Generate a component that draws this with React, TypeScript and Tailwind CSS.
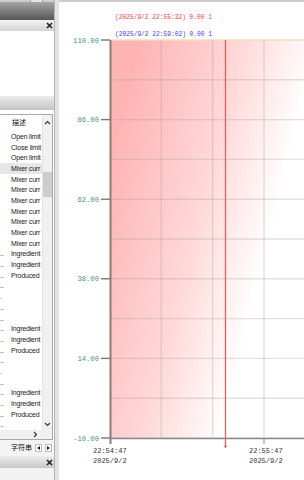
import React from 'react';

type Row = { a: string; b: string; blue?: boolean };

const rows: Row[] = [
  { a: '', b: 'Open limit' },
  { a: '', b: 'Close limit' },
  { a: '', b: 'Open limit' },
  { a: '', b: 'Mixer curr' },
  { a: '', b: 'Mixer curr' },
  { a: '', b: 'Mixer curr' },
  { a: '', b: 'Mixer curr' },
  { a: '', b: 'Mixer curr' },
  { a: '', b: 'Mixer curr' },
  { a: '', b: 'Mixer curr' },
  { a: '', b: 'Mixer curr' },
  { a: '..', b: 'Ingredient' },
  { a: '..', b: 'Ingredient' },
  { a: '..', b: 'Produced' },
  { a: '..', b: '' },
  { a: '.', b: '', blue: true },
  { a: '..', b: '' },
  { a: '..', b: '' },
  { a: '..', b: 'Ingredient' },
  { a: '..', b: 'Ingredient' },
  { a: '..', b: 'Produced' },
  { a: '..', b: '' },
  { a: '.', b: '', blue: true },
  { a: '..', b: '' },
  { a: '..', b: 'Ingredient' },
  { a: '..', b: 'Ingredient' },
  { a: '..', b: 'Produced' },
  { a: '..', b: '' },
];

const yLabels = [
  { v: '110.00', y: 40 },
  { v: '86.00', y: 119.6 },
  { v: '62.00', y: 199.2 },
  { v: '38.00', y: 278.8 },
  { v: '14.00', y: 358.4 },
  { v: '-10.00', y: 438 },
];

function CloseX() {
  return (
    <svg width="7" height="7" viewBox="0 0 7 7">
      <path d="M1 1L6 6M6 1L1 6" stroke="#222" strokeWidth="1.6" />
    </svg>
  );
}

function Chart() {
  const hLines = Array.from({ length: 11 }, (_, i) => 40 + i * 39.8);
  const vLines = [161.3, 212.6, 264];
  return (
    <svg width="245" height="480" viewBox="59 0 245 480" className="block">
      <defs>
        <linearGradient id="fill" gradientUnits="userSpaceOnUse" x1="100" y1="200" x2="300" y2="250">
          <stop offset="0" stopColor="#ffb4b4" />
          <stop offset="0.48" stopColor="#ffd8d8" />
          <stop offset="0.85" stopColor="#ffffff" />
        </linearGradient>
      </defs>
      <rect x="59" y="0" width="245" height="2" fill="#cdcdcd" />
      <text x="115" y="19" fontSize="7" fill="#ff3b3b" fontFamily="'Liberation Mono', monospace" textLength="97" lengthAdjust="spacingAndGlyphs">
        (2025/9/2 22:55:32) 0.00 1
      </text>
      <text x="115" y="36" fontSize="7" fill="#3b3bff" fontFamily="'Liberation Mono', monospace" textLength="97" lengthAdjust="spacingAndGlyphs">
        (2025/9/2 22:59:02) 0.00 1
      </text>
      <rect x="111" y="40" width="193" height="398" fill="url(#fill)" />
      {hLines.map((y, i) => (
        <line key={i} x1="111" x2="304" y1={y} y2={y} stroke={i === 0 ? '#f3dcc4' : 'rgba(150,150,150,0.28)'} strokeWidth="1.4" />
      ))}
      {vLines.map((x, i) => (
        <line key={i} x1={x} x2={x} y1="40" y2="437" stroke="rgba(150,150,150,0.28)" strokeWidth="1.4" />
      ))}
      <line x1="225.5" x2="225.5" y1="40" y2="446" stroke="#ff5050" strokeWidth="1.2" />
      <rect x="224.5" y="445.5" width="2" height="2" fill="#ff3030" />
      <line x1="110.5" x2="110.5" y1="40" y2="444" stroke="#8a7d72" strokeWidth="2" />
      <line x1="110" x2="304" y1="438.5" y2="438.5" stroke="#8a8a8a" strokeWidth="1.5" />
      <line x1="264" x2="264" y1="438" y2="444" stroke="#8a8a8a" strokeWidth="1" />
      {yLabels.map((l) => (
        <g key={l.v}>
          <line x1="101" x2="110" y1={l.y} y2={l.y} stroke="#777" strokeWidth="1.4" />
          <text x="99" y={l.y + 2.5} fontSize="7.2" fill="#3f9a70" textAnchor="end" fontFamily="'Liberation Mono', monospace">
            {l.v}
          </text>
        </g>
      ))}
      <g fontSize="7" fill="#333" fontFamily="'Liberation Mono', monospace">
        <text x="93" y="452.5">22:54:47</text>
        <text x="93" y="462.5">2025/9/2</text>
        <text x="249" y="452.5">22:55:47</text>
        <text x="249" y="462.5">2025/9/2</text>
      </g>
    </svg>
  );
}

export default function App() {
  return (
    <div className="w-[304px] h-[480px] flex bg-white overflow-hidden" style={{ fontFamily: "'Liberation Sans', 'Noto Sans CJK SC', sans-serif" }}>
      {/* left dock */}
      <div className="w-[55px] shrink-0 flex flex-col border-r border-[#b4b4b4] bg-white">
        <div className="h-[2px] bg-[#cdcdcd] flex">
          <div className="ml-[30px] w-[13px] bg-[#e4e4e4] border-x border-[#a0a0a0]" />
        </div>
        <div className="h-[18px] bg-gradient-to-b from-[#a6a6a6] to-[#565656]" />
        <div className="h-[11px] bg-gradient-to-b from-[#f3f3f3] to-[#d4d4d4] flex items-center justify-end pr-[1px]">
          <CloseX />
        </div>
        <div className="h-[65px]" />
        <div className="h-[14px] bg-gradient-to-b from-[#ededed] to-[#c4c4c4]" />
        <div className="h-[4px]" />
        {/* list */}
        <div className="h-[326px] mr-[1px] border-y border-r border-[#a8a8a8] flex flex-col">
          <div className="flex h-[315px]">
            <div className="w-[42px] overflow-hidden flex flex-col">
              <div className="h-[16px] shrink-0 flex items-center text-[7px] text-[#111] pl-[12px]">描述</div>
              {rows.map((r, i) => (
                <div key={i} className={`h-[10.7px] shrink-0 flex items-center text-[7px] leading-none text-[#222] tracking-[-0.2px] ${i === 3 ? 'bg-[#e6e6e6]' : ''}`}>
                  <div className={`w-[9px] shrink-0 whitespace-nowrap ${r.blue ? 'text-[#2a5cd8]' : ''}`}>{r.a}</div>
                  <div className="pl-[2px] whitespace-nowrap">{r.b}</div>
                </div>
              ))}
            </div>
            <div className="w-[10px] bg-[#f0f0f0] flex flex-col items-center border-l border-[#e4e4e4]">
              <div className="h-[14px] flex items-center justify-center">
                <svg width="7" height="5" viewBox="0 0 7 5"><path d="M1 4L3.5 1.5L6 4" stroke="#333" strokeWidth="1.1" fill="none" /></svg>
              </div>
              <div className="h-[43px]" />
              <div className="w-[9px] h-[25px] bg-[#cdcdcd]" />
              <div className="flex-1" />
              <div className="h-[12px] flex items-center justify-center">
                <svg width="7" height="5" viewBox="0 0 7 5"><path d="M1 1L3.5 3.5L6 1" stroke="#333" strokeWidth="1.1" fill="none" /></svg>
              </div>
            </div>
          </div>
          <div className="flex-1 flex bg-[#f0f0f0]">
            <div className="w-[42px] flex items-center justify-end pr-[4px]">
              <svg width="5" height="7" viewBox="0 0 5 7"><path d="M1 1L3.5 3.5L1 6" stroke="#333" strokeWidth="1.1" fill="none" /></svg>
            </div>
          </div>
        </div>
        {/* tab strip */}
        <div className="h-[16px] flex items-center pl-[11px] gap-[3px] bg-[#f4f4f4]">
          <span className="text-[7px] text-[#111]">字符串</span>
          <div className="w-[7px] h-[8px] border border-[#bdbdbd] bg-white flex items-center justify-center">
            <svg width="3" height="4" viewBox="0 0 3 4"><path d="M3 0L0 2L3 4Z" fill="#222" /></svg>
          </div>
          <div className="w-[7px] h-[8px] border border-[#bdbdbd] bg-white flex items-center justify-center">
            <svg width="3" height="4" viewBox="0 0 3 4"><path d="M0 0L3 2L0 4Z" fill="#222" /></svg>
          </div>
        </div>
        <div className="h-[12px] bg-gradient-to-b from-[#ededed] to-[#c8c8c8] flex items-center justify-end pr-[1px]">
          <CloseX />
        </div>
        <div className="flex-1 bg-[#f2f2f2]" />
      </div>
      {/* splitter */}
      <div className="w-[4px] shrink-0 bg-[#e3e3e3]" />
      {/* chart */}
      <div className="flex-1 relative">
        <Chart />
      </div>
    </div>
  );
}
